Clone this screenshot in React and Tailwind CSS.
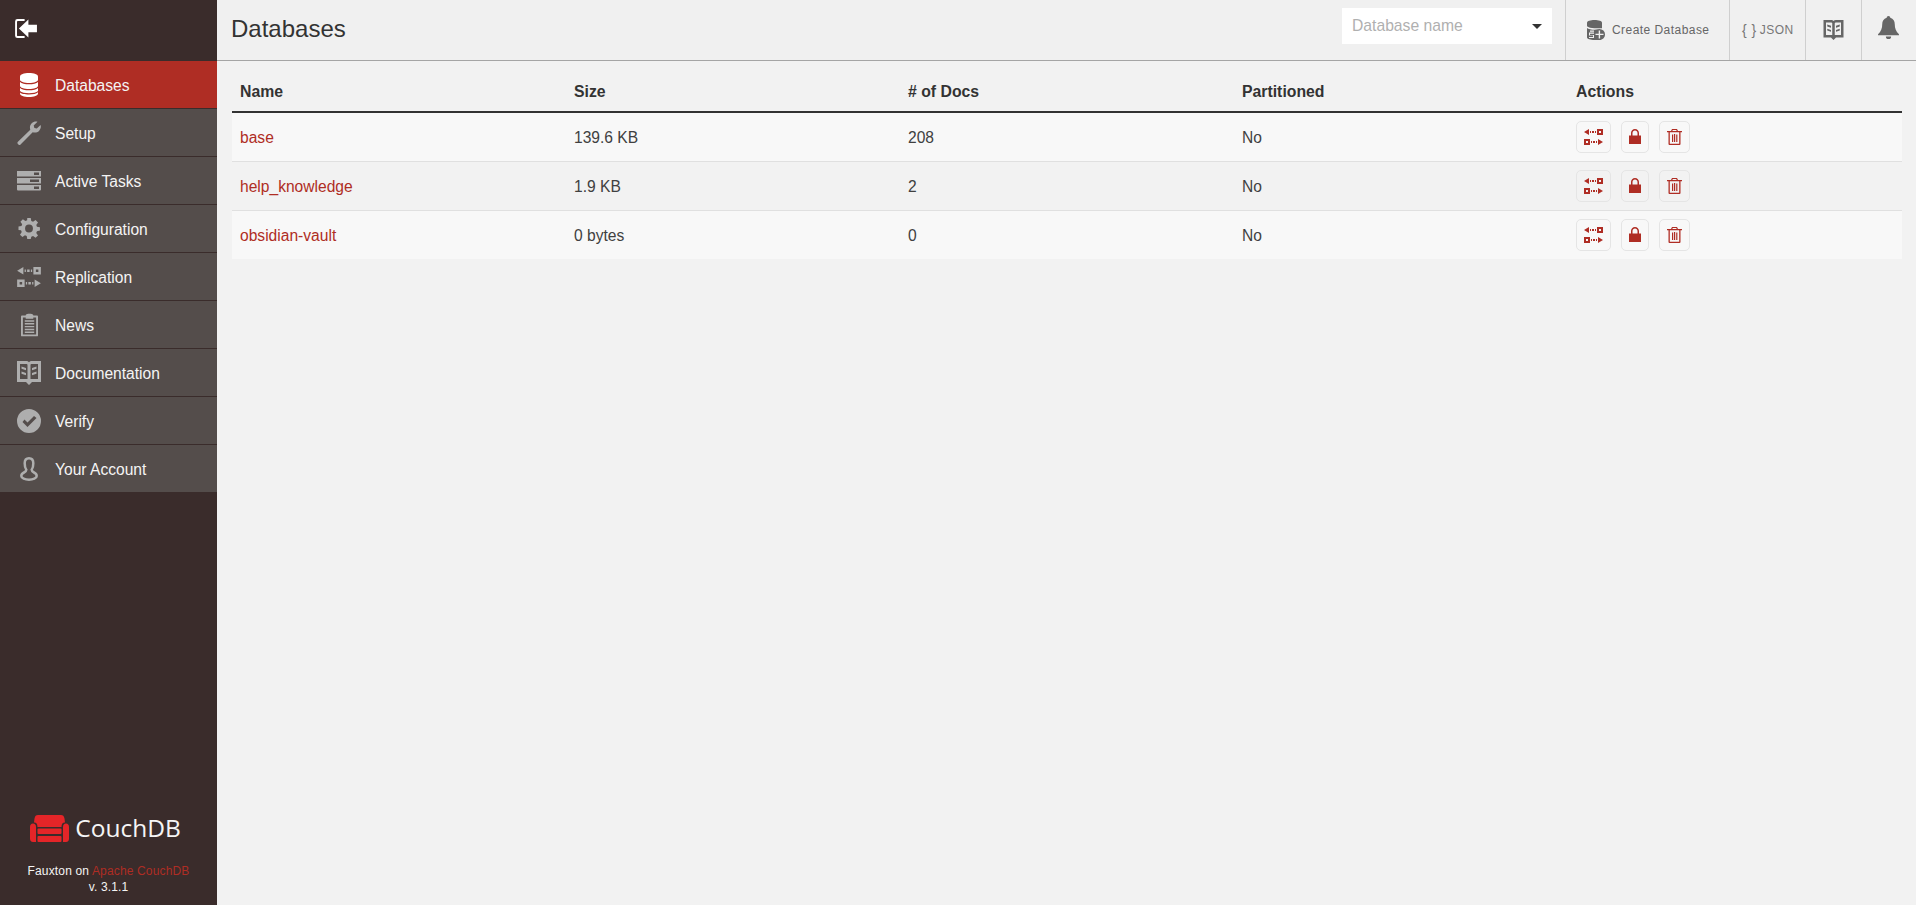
import React from "react";

const SANS = "font-['Liberation_Sans',Arial,sans-serif]";

function DbIcon({ className }) {
  return (
    <svg viewBox="0 0 18 24" className={className} fill="currentColor">
      <path d="M9 0c5 0 9 1.300 9 3.500v3.300C18 8.700 14 10 9 10S0 8.700 0 6.800V3.500C0 1.300 4 0 9 0z" />
      <path d="M0 9c1.500 1.500 5 2.300 9 2.300s7.500-.8 9-2.300v3.700c0 1.900-4 3.300-9 3.300s-9-1.400-9-3.300z" />
      <path d="M0 15c1.500 1.500 5 2.300 9 2.300s7.500-.8 9-2.300v5.500c0 2.100-4 3.500-9 3.500s-9-1.400-9-3.500z" />
      <path d="M0 18c1.500 1.500 5 2.200 9 2.200s7.500-.7 9-2.200v1.200c-1.500 1.500-5 2.200-9 2.200s-9-.7-9-2.200z" fill="#af2d24" />
    </svg>
  );
}

function WrenchIcon({ className }) {
  return (
    <svg viewBox="0 0 24 24" className={className} fill="currentColor">
      <path d="M.7 21 13.300 8.700c-.8-2.600-.3-4.900 1.400-6.500C16.300.7 18.500.1 20.500.7l-3.800 3.800.7 2.400 2.400.7L23.600 4c.6 2 0 4.300-1.600 5.900-1.600 1.500-3.900 2.100-6.300 1.300L3.300 23.700c-.6.500-1.200.4-1.600 0l-1-1c-.4-.5-.4-1.200 0-1.700z" />
    </svg>
  );
}

function TasksIcon({ className }) {
  return (
    <svg viewBox="0 0 24 20" className={className} fill="currentColor">
      <path fillRule="evenodd" d="M0 0h24v5.500H0zm17 1.500v2.500h5V1.500zM0 7h24v5.500H0zm13 1.500V11h9V8.500zM0 14h24v4.500a1 1 0 0 1-1 1H1a1 1 0 0 1-1-1zm17 1.500V18h5v-2.500z" />
    </svg>
  );
}

function CogIcon({ className }) {
  return (
    <svg viewBox="0 0 24 24" className={className} fill="currentColor">
      <path fillRule="evenodd" d="M10 0h4l.6 3.400 2 .8L19.500 2.200l2.800 2.800-2 2.900.8 2 3.400.6v3.900l-3.400.6-.8 2 2 2.900-2.800 2.800-2.900-2-2 .8L14 24h-4l-.6-3.400-2-.8-2.900 2-2.800-2.800 2-2.900-.8-2L0 13.600V9.700l3.400-.6.800-2-2-2.900L5 1.400l2.900 2 2-.8zM12 7.500a4.500 4.500 0 1 0 0 9 4.500 4.500 0 0 0 0-9z" />
    </svg>
  );
}

function ReplicateIcon({ className }) {
  return (
    <svg viewBox="0 0 19 16" className={className} fill="currentColor">
      <path fillRule="evenodd" d="M0 3 5 0v6zM6 2h1v2H6zM8 2h2v2H8zM11 2h1v2h-1zM13 0h6v6h-6zm2 2v2h2V2zM0 10h6v6H0zm2 2v2h2v-2zM7 12h1v2H7zM9 12h2v2H9zM12 12h1v2h-1zM14 10l5 3-5 3z" />
    </svg>
  );
}

function NewsIcon({ className }) {
  return (
    <svg viewBox="0 0 18 24" className={className} fill="currentColor">
      <path fillRule="evenodd" d="M1 2h4V1.500C5 .5 7.500 0 9 0s4 .5 4 1.500V2h4a1 1 0 0 1 1 1v20a1 1 0 0 1-1 1H1a1 1 0 0 1-1-1V3a1 1 0 0 1 1-1zm1 2v18h14V4h-3v1.500H5V4zm2 3h10v1.500H4zm0 3h10v1.500H4zm0 3h10v1.500H4zm0 3h10v1.500H4zm0 3h10v1.500H4z" />
    </svg>
  );
}

function BookIcon({ className }) {
  return (
    <svg viewBox="0 0 24 24" className={className} fill="currentColor">
      <path fillRule="evenodd" d="M0 0h9c1.300 0 2.400.4 3 1.200C12.600.4 13.700 0 15 0h9v21h-9l-3 3-3-3H0zm3 3v15h7.500V4c0-.6-.5-1-1.200-1zm18 0h-6.300c-.7 0-1.200.4-1.200 1v14H21zM4.500 5.500 9 7v2.200L4.500 7.700zm0 5L9 12v2.200l-4.500-1.500zm15-5V7.700L15 9.200V7zm0 5v2.200L15 14.200V12z" />
    </svg>
  );
}

function CheckIcon({ className }) {
  return (
    <svg viewBox="0 0 24 24" className={className} fill="currentColor">
      <path fillRule="evenodd" d="M12 0a12 12 0 1 1 0 24 12 12 0 0 1 0-24zm5 7-6.500 6.500L7.500 10.500 5.500 13l5 5L19.500 9z" />
    </svg>
  );
}

function UserIcon({ className }) {
  return (
    <svg viewBox="0 0 18 24" className={className} fill="none" stroke="currentColor" strokeWidth="2.500">
      <path d="M9 1.300c-2.800 0-4.300 2-4.300 5 0 3 .6 5.200 1.600 6.500 0 1.400-.8 2-2.300 2.700-1.700.8-2.700 2-2.700 3.500 0 2.300 3.700 3.700 7.700 3.700s7.700-1.400 7.700-3.700c0-1.500-1-2.700-2.700-3.500-1.500-.7-2.300-1.300-2.300-2.700 1-1.300 1.600-3.500 1.600-6.500 0-3-1.500-5-4.300-5z" />
    </svg>
  );
}

function ExitIcon({ className }) {
  return (
    <svg viewBox="0 0 24 20" className={className} fill="currentColor">
      <path d="M10 0v2H3a1 1 0 0 0-1 1v14a1 1 0 0 0 1 1h7v2H2.500A2.500 2.500 0 0 1 0 17.500v-15A2.500 2.500 0 0 1 2.500 0z" />
      <path d="M14 0.500v5.500h9v8h-9v5.500L4 10z" />
    </svg>
  );
}

function BellIcon({ className }) {
  return (
    <svg viewBox="0 0 20 22" className={className} fill="currentColor">
      <path d="M10 0c1 0 1.700.7 1.700 1.600 3 .8 4.300 3.200 4.300 6.400 0 4 1 6.500 4 9.500v1H0v-1c3-3 4-5.500 4-9.500 0-3.200 1.300-5.600 4.300-6.400C8.300.7 9 0 10 0zM7.500 19.500h5a2.500 2.500 0 0 1-5 0z" />
    </svg>
  );
}

function CreateDbIcon({ className }) {
  return (
    <svg viewBox="0 0 18 20" className={className} fill="currentColor">
      <path d="M7.500 0c4 0 7.500 1 7.500 2.500v5.700H7.300c-3 0-6-.8-7.300-2V2.500C0 1 3.500 0 7.500 0z" />
      <path fillRule="evenodd" d="M12.500 9A5.500 5.500 0 0 1 18 14.500c0 3-2.500 5.500-5.500 5.500h-5C3.500 20 0 19 0 17.500V8c1.300 1 4.300 1.800 7.500 1.800zM3 10.500v1.200h4v-1.200zM2 12.500v3h4v1.400H2V18h5v-3H3v-1.300h4v-1.200zM11.700 10.500v3.200H8.500v1.400h3.200v3.400h1.400v-3.400h3.400v-1.400h-3.400v-3.200z" />
    </svg>
  );
}

function LockIcon({ className }) {
  return (
    <svg viewBox="0 0 12 15" className={className} fill="currentColor">
      <path fillRule="evenodd" d="M6 0c2.300 0 4 1.800 4 4v2.500h2V15H0V6.500h2V4c0-2.200 1.700-4 4-4zm0 1.500C4.600 1.500 3.500 2.600 3.500 4v2.500h5V4c0-1.400-1.100-2.500-2.500-2.500z" />
    </svg>
  );
}

function TrashIcon({ className }) {
  return (
    <svg viewBox="0 0 15 16" className={className} fill="currentColor">
      <path fillRule="evenodd" d="M5 0h5l1 2h4v1.200h-1.500V15a1 1 0 0 1-1 1h-10a1 1 0 0 1-1-1V3.200H0V2h4zm.800 1-.5 1h4.400l-.5-1zM2.800 3.200v11.600h9.400V3.200zM5 5.500h1.200v7.500H5zM7 5h1.200v8H7zm2.200.5h1.200v7.500H9.200z" />
    </svg>
  );
}

function CouchLogo({ className }) {
  return (
    <svg viewBox="0 0 39 27" className={className} fill="#e42528">
      <path d="M8 0h23c2 0 3 1 3.500 3.500L35 7.500c-2-.2-3.500 1-3.500 4.500h-24C7.500 8.500 6 7.300 4 7.500l.5-4C5 1 6 0 8 0z" />
      <rect x="7.500" y="13.500" width="24" height="5.500" rx="1" />
      <rect x="7.500" y="21" width="24" height="6" rx="1" />
      <path d="M3 8.500C5 8.500 6 10 6 12v15H3c-2 0-3-1.500-3-3.500V11.500C0 10 1.200 8.500 3 8.500z" />
      <path d="M36 8.500C34 8.500 33 10 33 12v15h3c2 0 3-1.500 3-3.500V11.500C39 10 37.800 8.500 36 8.500z" />
    </svg>
  );
}

const navItems = [
  { label: "Databases", icon: <DbIcon className="w-[18px] h-[24px]" />, active: true },
  { label: "Setup", icon: <WrenchIcon className="w-[24px] h-[24px]" /> },
  { label: "Active Tasks", icon: <TasksIcon className="w-[24px] h-[20px]" /> },
  { label: "Configuration", icon: <CogIcon className="w-[22px] h-[21px]" /> },
  { label: "Replication", icon: <ReplicateIcon className="w-[24px] h-[20px]" /> },
  { label: "News", icon: <NewsIcon className="w-[17px] h-[24px]" /> },
  { label: "Documentation", icon: <BookIcon className="w-[24px] h-[24px]" /> },
  { label: "Verify", icon: <CheckIcon className="w-[24px] h-[24px]" /> },
  { label: "Your Account", icon: <UserIcon className="w-[18px] h-[24px]" /> },
];

const databases = [
  { name: "base", size: "139.6 KB", docs: "208", partitioned: "No" },
  { name: "help_knowledge", size: "1.9 KB", docs: "2", partitioned: "No" },
  { name: "obsidian-vault", size: "0 bytes", docs: "0", partitioned: "No" },
];

function Sidebar() {
  return (
    <aside className="w-[217px] shrink-0 h-full bg-[#3a2c2b] flex flex-col">
      <div className="h-[61px] flex items-center pl-[15px] text-white">
        <ExitIcon className="w-[23px] h-[19px] mb-[4px]" />
      </div>
      <nav>
        {navItems.map((item) => (
          <a
            key={item.label}
            href="#"
            className={`flex items-center h-[48px] border-b border-[#3a2c2b] text-[#f4f4f4] text-[15.6px] ${
              item.active ? "bg-[#af2d24]" : "bg-[#544d4b]"
            }`}
          >
            <span className={`w-[24px] ml-[17px] mr-[14px] flex justify-center ${item.active ? "text-white" : "text-[#aeaeae]"}`}>
              {item.icon}
            </span>
            <span className="pt-[2px]">{item.label}</span>
          </a>
        ))}
      </nav>
      <div className="mt-auto pb-[10px] flex flex-col items-center text-[#f4f4f4]">
        <div className="flex items-center gap-[6px] mb-[20px] mr-[6px]">
          <CouchLogo className="w-[39px] h-[27px]" />
          <span className="font-['Open_Sans',sans-serif] text-[24.5px] leading-[30px] text-[#f5f5f5]">CouchDB</span>
        </div>
        <p className="text-[12px] leading-[16px] tracking-[0.15px]">
          Fauxton on <a href="#" className="text-[#af2d24]">Apache CouchDB</a>
        </p>
        <p className="text-[12px] leading-[16px] tracking-[0.15px]">v. 3.1.1</p>
      </div>
    </aside>
  );
}

function Header() {
  return (
    <header className="h-[61px] shrink-0 border-b border-[#a5a5a5] bg-[#f0f0f0] flex items-stretch">
      <h1 className="pl-[14px] pt-[11px] text-[24px] leading-[36px] text-[#333]">Databases</h1>
      <div className="ml-auto flex items-stretch">
        <div className="self-start mt-[8px] mr-[13px] w-[210px] h-[36px] bg-white flex items-center justify-between pl-[10px] pr-[10px]">
          <span className="text-[15.7px] text-[#b0b0b0]">Database name</span>
          <span className="w-0 h-0 border-x-[5px] border-x-transparent border-t-[5px] border-t-[#333]" />
        </div>
        <a href="#" className="w-[164px] border-l border-[#cfcfcf] flex items-center pl-[21px] gap-[7px] text-[12px] tracking-[0.45px] text-[#666]">
          <CreateDbIcon className="w-[18px] h-[20px] shrink-0" />
          Create Database
        </a>
        <a href="#" className="w-[76px] border-l border-[#cfcfcf] flex items-center pl-[12px] gap-[3px] text-[12px] tracking-[0.5px] text-[#777]">
          <span className="text-[14px] font-light">{"{ }"}</span>
          JSON
        </a>
        <a href="#" className="w-[56px] border-l border-[#cfcfcf] flex items-center justify-center text-[#666]">
          <BookIcon className="w-[21px] h-[20px]" />
        </a>
        <a href="#" className="w-[55px] border-l border-[#cfcfcf] flex items-start pl-[16px] pt-[16px] text-[#666]">
          <BellIcon className="w-[21px] h-[23px]" />
        </a>
      </div>
    </header>
  );
}

function ActionButton({ width, children }) {
  return (
    <button className={`h-[32px] ${width} border border-[#e5e5e5] rounded-[5px] flex items-center justify-center text-[#af2d24]`}>
      {children}
    </button>
  );
}

function DatabaseTable() {
  return (
    <table className="w-full table-fixed border-separate border-spacing-0 text-[15.6px] text-[#404040]">
      <thead>
        <tr className="text-left text-[#333] [&>th]:h-[42px] [&>th]:pl-[8px] [&>th]:pt-[2px] [&>th]:border-b-2 [&>th]:border-[#333] [&>th]:font-bold [&>th]:text-[15.8px]">
          <th>Name</th>
          <th>Size</th>
          <th># of Docs</th>
          <th>Partitioned</th>
          <th>Actions</th>
        </tr>
      </thead>
      <tbody>
        {databases.map((db, i) => (
          <tr
            key={db.name}
            className={`${i % 2 === 0 ? "bg-[#f8f8f8]" : "bg-[#f2f2f2]"} [&>td]:pl-[8px] ${
              i < 2 ? "[&>td]:h-[49px] [&>td]:border-b [&>td]:border-[#e0e0e0]" : "[&>td]:h-[48px]"
            }`}
          >
            <td><a href="#" className="text-[#af2d24] relative top-[1px]">{db.name}</a></td>
            <td><span className="relative top-[1px]">{db.size}</span></td>
            <td><span className="relative top-[1px]">{db.docs}</span></td>
            <td><span className="relative top-[1px]">{db.partitioned}</span></td>
            <td>
              <div className="flex gap-[10px]">
                <ActionButton width="w-[35px]"><ReplicateIcon className="w-[19px] h-[16px]" /></ActionButton>
                <ActionButton width="w-[28px]"><LockIcon className="w-[12px] h-[15px] -mt-[2px]" /></ActionButton>
                <ActionButton width="w-[31px]"><TrashIcon className="w-[15px] h-[16px]" /></ActionButton>
              </div>
            </td>
          </tr>
        ))}
      </tbody>
    </table>
  );
}

export default function App() {
  return (
    <div className={`${SANS} h-screen w-full flex overflow-hidden bg-[#f2f2f2]`}>
      <Sidebar />
      <main className="flex-1 min-w-0 flex flex-col">
        <Header />
        <div className="pl-[15px] pr-[14px] pt-[10px]">
          <DatabaseTable />
        </div>
      </main>
    </div>
  );
}
